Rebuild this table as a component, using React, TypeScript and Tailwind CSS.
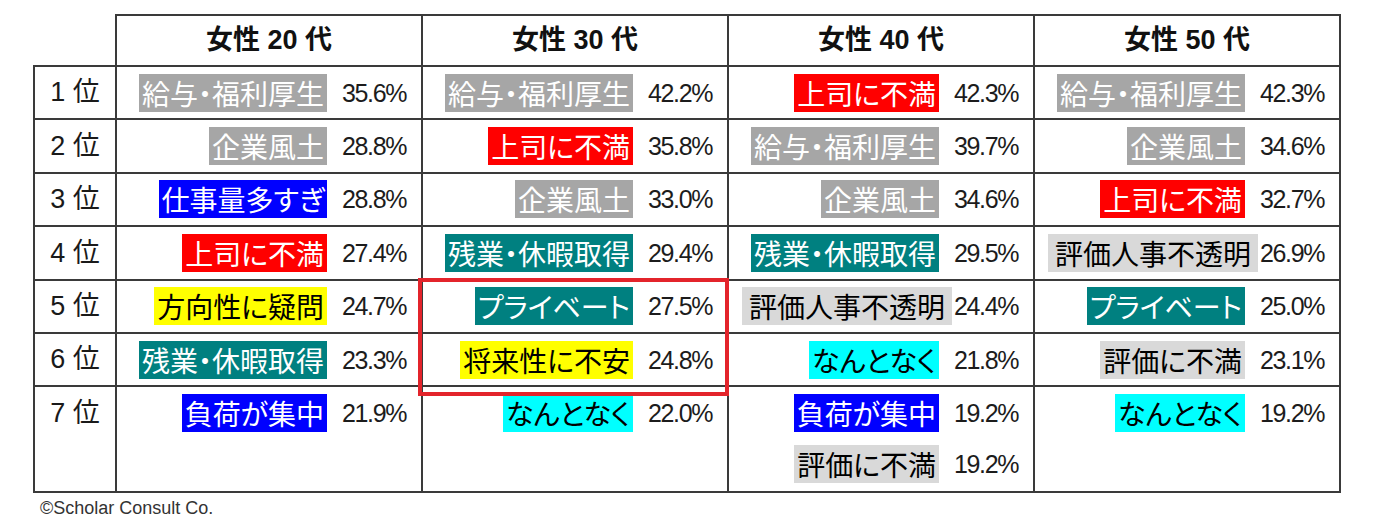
type Tone = "gray" | "blue" | "red" | "yellow" | "teal" | "light" | "cyan";

type Entry = {
  label: string;
  tone: Tone;
  pct: string;
  tight?: boolean;
};

const toneClass: Record<Tone, string> = {
  gray: "bg-[#a6a6a6] text-white",
  blue: "bg-[#0000ff] text-white",
  red: "bg-[#ff0000] text-white",
  yellow: "bg-[#ffff00] text-black",
  teal: "bg-[#008080] text-white",
  light: "bg-[#d9d9d9] text-black",
  cyan: "bg-[#00ffff] text-black",
};

const headers = ["女性 20 代", "女性 30 代", "女性 40 代", "女性 50 代"];

// columns[col][rank] -> entries shown in that cell
const columns: Entry[][][] = [
  [
    [{ label: "給与・福利厚生", tone: "gray", pct: "35.6%" }],
    [{ label: "企業風土", tone: "gray", pct: "28.8%" }],
    [{ label: "仕事量多すぎ", tone: "blue", pct: "28.8%" }],
    [{ label: "上司に不満", tone: "red", pct: "27.4%" }],
    [{ label: "方向性に疑問", tone: "yellow", pct: "24.7%" }],
    [{ label: "残業・休暇取得", tone: "teal", pct: "23.3%" }],
    [{ label: "負荷が集中", tone: "blue", pct: "21.9%" }],
  ],
  [
    [{ label: "給与・福利厚生", tone: "gray", pct: "42.2%" }],
    [{ label: "上司に不満", tone: "red", pct: "35.8%" }],
    [{ label: "企業風土", tone: "gray", pct: "33.0%" }],
    [{ label: "残業・休暇取得", tone: "teal", pct: "29.4%" }],
    [{ label: "プライベート", tone: "teal", pct: "27.5%" }],
    [{ label: "将来性に不安", tone: "yellow", pct: "24.8%" }],
    [{ label: "なんとなく", tone: "cyan", pct: "22.0%" }],
  ],
  [
    [{ label: "上司に不満", tone: "red", pct: "42.3%" }],
    [{ label: "給与・福利厚生", tone: "gray", pct: "39.7%" }],
    [{ label: "企業風土", tone: "gray", pct: "34.6%" }],
    [{ label: "残業・休暇取得", tone: "teal", pct: "29.5%" }],
    [{ label: "評価人事不透明", tone: "light", pct: "24.4%", tight: true }],
    [{ label: "なんとなく", tone: "cyan", pct: "21.8%" }],
    [
      { label: "負荷が集中", tone: "blue", pct: "19.2%" },
      { label: "評価に不満", tone: "light", pct: "19.2%" },
    ],
  ],
  [
    [{ label: "給与・福利厚生", tone: "gray", pct: "42.3%" }],
    [{ label: "企業風土", tone: "gray", pct: "34.6%" }],
    [{ label: "上司に不満", tone: "red", pct: "32.7%" }],
    [{ label: "評価人事不透明", tone: "light", pct: "26.9%", tight: true }],
    [{ label: "プライベート", tone: "teal", pct: "25.0%" }],
    [{ label: "評価に不満", tone: "light", pct: "23.1%" }],
    [{ label: "なんとなく", tone: "cyan", pct: "19.2%" }],
  ],
];

const border = "border-2 border-[#3a3a3a]";

function Line({ entry }: { entry: Entry }) {
  return (
    <div className="flex h-[51.4px] items-center justify-end pr-[15px]">
      <span
        className={`${toneClass[entry.tone]} ${
          entry.tight ? "px-[7px]" : "px-[3px]"
        } font-['Noto_Sans_CJK_JP',sans-serif] text-[28px] leading-[38px] [font-feature-settings:'palt']`}
      >
        {entry.label}
      </span>
      <span
        className={`${
          entry.tight ? "ml-[2px]" : "ml-[15px]"
        } font-['Liberation_Sans',sans-serif] text-[25px] leading-[38px] tracking-[-1.4px] text-[#1c1c1c]`}
      >
        {entry.pct}
      </span>
    </div>
  );
}

export default function App() {
  return (
    <div className="min-h-[525px] w-[1382px] bg-white pt-[14px]">
      <div className="relative ml-[33px] w-[1306px]">
        <table className="w-[1306px] table-fixed border-collapse">
          <colgroup>
            <col className="w-[82px]" />
            <col className="w-[306px]" />
            <col className="w-[306px]" />
            <col className="w-[306px]" />
            <col className="w-[306px]" />
          </colgroup>
          <thead>
            <tr>
              <th className="border-0 p-0"></th>
              {headers.map((h) => (
                <th
                  key={h}
                  className={`${border} h-[51px] p-0 text-center font-['Liberation_Sans','Noto_Sans_CJK_JP',sans-serif] text-[27px] font-bold text-[#111]`}
                >
                  {h}
                </th>
              ))}
            </tr>
          </thead>
          <tbody>
            {[0, 1, 2, 3, 4, 5, 6].map((rank) => (
              <tr key={rank}>
                <td
                  className={`${border} p-0 text-center align-top font-['Liberation_Sans','Noto_Sans_CJK_JP',sans-serif] text-[27px] text-[#1a1a1a]`}
                >
                  <div className="flex h-[51.4px] items-center justify-center">
                    {rank + 1} 位
                  </div>
                  {rank === 6 && <div className="h-[52.5px]"></div>}
                </td>
                {columns.map((col, ci) => (
                  <td key={ci} className={`${border} p-0 align-top`}>
                    {col[rank].map((entry) => (
                      <Line key={entry.label} entry={entry} />
                    ))}
                  </td>
                ))}
              </tr>
            ))}
          </tbody>
        </table>
        <div className="pointer-events-none absolute left-[385px] top-[264px] h-[118px] w-[311px] border-4 border-[#e3242b]"></div>
      </div>
      <p className="ml-[40px] mt-[4px] font-['Liberation_Sans',sans-serif] text-[18px] leading-[22px] text-[#333]">
        ©Scholar Consult Co.
      </p>
    </div>
  );
}
